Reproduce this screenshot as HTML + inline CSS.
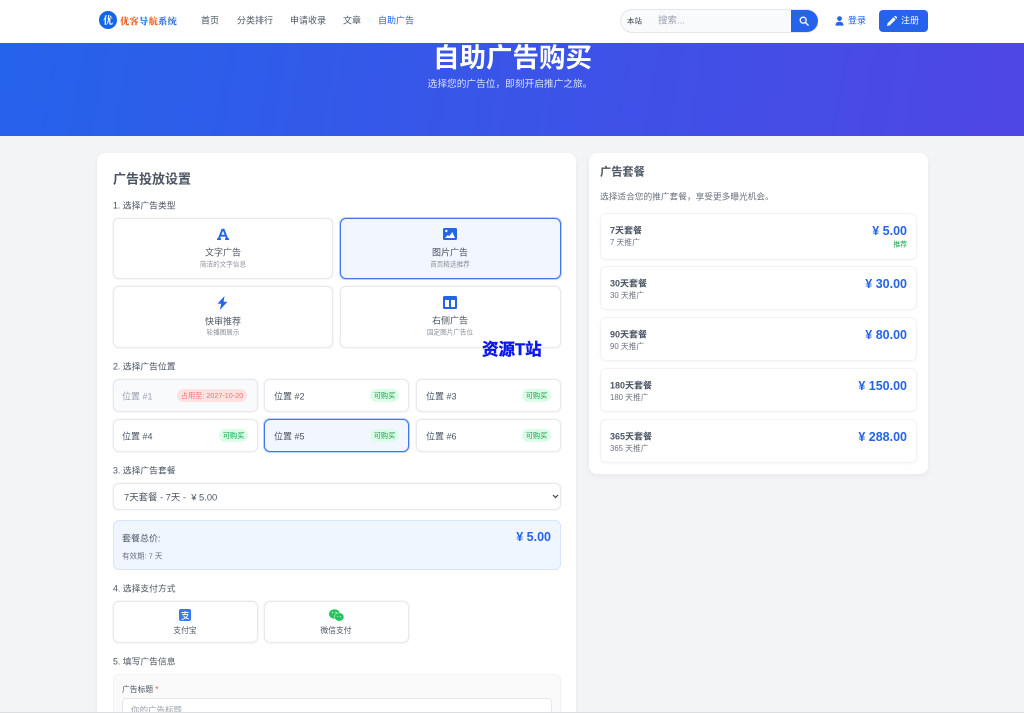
<!DOCTYPE html>
<html lang="zh"><head><meta charset="utf-8"><title>自助广告购买</title>
<style>
*{box-sizing:border-box}
html{margin:0;padding:0;width:1024px;height:713px;overflow:hidden;background:#f3f4f6}
body{margin:0;padding:0;width:1024px;height:713px;overflow:hidden;background:#f3f4f6;position:relative;font-family:"Liberation Sans","Noto Sans CJK SC",sans-serif;color:#4b5563;filter:blur(.3px)}
.a{position:absolute;white-space:nowrap}
.t{position:absolute;white-space:nowrap;transform:translateY(calc(-50% + 2px));line-height:1}
.c{text-align:center;transform:translate(-50%,calc(-50% + 2px))}
.b{position:absolute;background:#fff;border:1px solid #e7e9ec;border-radius:6px;box-shadow:0 0 0 1px rgba(229,231,235,.35)}
.sel{background:#f2f6fe;border:1px solid #3f78ee;box-shadow:0 0 0 1px rgba(63,120,238,.35)}
.tag{position:absolute;height:13px;line-height:13px;border-radius:7px;background:#dcfce7;color:#16a34a;font-size:7.200px;text-align:center;white-space:nowrap}
.pk{position:absolute;left:600px;width:317px;background:#fff;border:1px solid #f1f2f4;border-radius:6px;box-shadow:0 1px 2px rgba(0,0,0,.03)}
.price{position:absolute;right:21px;white-space:nowrap;font-size:12.500px;font-weight:700;color:#2563eb;line-height:1;transform:translateY(-50%)}
</style></head><body>

<div class="a" style="left:0;top:0;width:1024px;height:43px;background:#fff"></div>
<div class="a" style="left:99px;top:11px;width:18px;height:18px;border-radius:50%;background:#1266e8;color:#fff;font:700 10px/18px 'Noto Serif CJK SC',serif;text-align:center">优</div>
<div class="t" style="left:120px;top:19px;font:900 9.300px/1 'Noto Serif CJK SC',serif;letter-spacing:.2px"><span style="color:#f2651c">优客</span><span style="color:#2f7be8">导</span><span style="color:#f2651c">航</span><span style="color:#2f7be8">系统</span></div>
<div class="t" style="left:201px;top:19px;font-size:9px;color:#4b5563">首页</div>
<div class="t" style="left:237px;top:19px;font-size:9px;color:#4b5563">分类排行</div>
<div class="t" style="left:290px;top:19px;font-size:9px;color:#4b5563">申请收录</div>
<div class="t" style="left:343px;top:19px;font-size:9px;color:#4b5563">文章</div>
<div class="t" style="left:378px;top:19px;font-size:9px;color:#2563eb">自助广告</div>

<div class="a" style="left:620px;top:9px;width:198px;height:24px;border-radius:12px;background:#f9fafb;border:1px solid #e5e7eb"></div>
<div class="a" style="left:791px;top:10px;width:27px;height:22px;background:#2563eb;border-radius:0 11px 11px 0"></div>
<svg class="a" style="left:799px;top:16px" width="10" height="10" viewBox="0 0 11 11"><circle cx="4.600" cy="4.600" r="3.300" fill="none" stroke="#fff" stroke-width="1.400"/><path d="M7 7l3 3" stroke="#fff" stroke-width="1.600" stroke-linecap="round"/></svg>
<div class="t" style="left:627px;top:19px;font-size:7.500px;color:#374151">本站</div>
<div class="t" style="left:658px;top:19px;font-size:9.500px;color:#9ca3af">搜索...</div>
<svg class="a" style="left:835px;top:16px" width="9" height="10" viewBox="0 0 9 10"><circle cx="4.500" cy="2.600" r="2.400" fill="#2563eb"/><path d="M.5 9.600C.5 7 2 5.800 4.500 5.800S8.500 7 8.500 9.600z" fill="#2563eb"/></svg>
<div class="t" style="left:848px;top:19px;font-size:9px;color:#2563eb">登录</div>
<div class="a" style="left:879px;top:10px;width:49px;height:22px;background:#2563eb;border-radius:4px"></div>
<svg class="a" style="left:887px;top:16px" width="10" height="10" viewBox="0 0 10 10"><path d="M0 10l.6-2.800L6.500 1.300l2.200 2.200L2.800 9.400zM7.200.6l.6-.5c.4-.3.800-.3 1.100 0l1 1c.3.3.3.800 0 1.100l-.5.600z" fill="#fff"/></svg>
<div class="t" style="left:901px;top:19px;font-size:9px;color:#fff">注册</div>

<div class="a" style="left:0;top:43px;width:1024px;height:93px;background:linear-gradient(100deg,#2563eb,#4f46e5)"></div>
<div class="t c" style="left:512.500px;top:56px;font-size:26.500px;font-weight:700;color:#fff">自助广告购买</div>
<div class="t c" style="left:510px;top:83px;font-size:9.700px;color:#dbe2fb">选择您的广告位，即刻开启推广之旅。</div>

<div class="a" style="left:97px;top:153px;width:479px;height:570px;background:#fff;border-radius:8px;box-shadow:0 2px 6px rgba(0,0,0,.05)"></div>
<div class="t" style="left:113px;top:177px;font-size:13px;font-weight:700;color:#4b5563">广告投放设置</div>
<div class="t" style="left:113px;top:204px;font-size:8.800px;color:#4b5563">1. 选择广告类型</div>

<div class="b" style="left:113px;top:218px;width:220px;height:61px"></div>
<svg class="a" style="left:217px;top:228px" width="12" height="12" viewBox="0 0 12 12"><path d="M4.700.8h2.600L11 10.200h1V12H8v-1.800h.9l-.6-1.600H3.700l-.6 1.600H4V12H0v-1.800h1zM4.400 6.800h3.200L6 2.700z" fill="#2563eb"/></svg>
<div class="t c" style="left:223px;top:251px;font-size:9px;color:#4b5563">文字广告</div>
<div class="t c" style="left:223px;top:264px;font-size:6.600px;color:#8b929d">简洁的文字信息</div>

<div class="b sel" style="left:340px;top:218px;width:221px;height:61px"></div>
<svg class="a" style="left:443px;top:228px" width="14" height="12" viewBox="0 0 14 12"><rect width="14" height="12" rx="1.500" fill="#2563eb"/><circle cx="3.300" cy="3" r="1.200" fill="#fff"/><path d="M2 10l2.800-3 1.400 1.300L9.300 4 12 10z" fill="#fff"/></svg>
<div class="t c" style="left:450px;top:251px;font-size:9px;color:#4b5563">图片广告</div>
<div class="t c" style="left:450px;top:264px;font-size:6.600px;color:#8b929d">首页精选推荐</div>

<div class="b" style="left:113px;top:286px;width:220px;height:62px"></div>
<svg class="a" style="left:217px;top:296px" width="11" height="14" viewBox="0 0 11 14"><path d="M7.500 0L.5 7.800h3.700L2.800 14 10.500 5.800H6.600z" fill="#2563eb"/></svg>
<div class="t c" style="left:223px;top:320px;font-size:9px;color:#4b5563">快审推荐</div>
<div class="t c" style="left:223px;top:332px;font-size:6.600px;color:#8b929d">轮播图展示</div>

<div class="b" style="left:340px;top:286px;width:221px;height:62px"></div>
<svg class="a" style="left:443px;top:296px" width="14" height="13" viewBox="0 0 14 13"><path fill-rule="evenodd" d="M1.500 0h11A1.500 1.500 0 0 1 14 1.500v10a1.500 1.500 0 0 1-1.500 1.500h-11A1.500 1.500 0 0 1 0 11.500v-10A1.500 1.500 0 0 1 1.500 0zM2 4v7h4V4zm6 0v7h4V4z" fill="#2563eb"/></svg>
<div class="t c" style="left:450px;top:319px;font-size:9px;color:#4b5563">右侧广告</div>
<div class="t c" style="left:450px;top:332px;font-size:6.600px;color:#8b929d">固定图片广告位</div>

<div class="t" style="left:482px;top:348px;font-size:16.500px;font-weight:700;color:#0a16ee;-webkit-text-stroke:.4px #0a16ee">资源T站</div>

<div class="t" style="left:113px;top:365px;font-size:8.800px;color:#4b5563">2. 选择广告位置</div>

<div class="b" style="left:113px;top:379px;width:145px;height:33px;background:#f9fafb"></div>
<div class="t" style="left:122px;top:395px;font-size:9px;color:#9ca3af">位置 #1</div>
<div class="tag" style="left:177px;top:389px;width:70px;background:#fee2e2;color:#f87171">占用至: 2027-10-20</div>

<div class="b" style="left:264px;top:379px;width:145px;height:33px"></div>
<div class="t" style="left:274px;top:395px;font-size:9px;color:#4b5563">位置 #2</div>
<div class="tag" style="left:370px;top:389px;width:29px">可购买</div>

<div class="b" style="left:416px;top:379px;width:145px;height:33px"></div>
<div class="t" style="left:426px;top:395px;font-size:9px;color:#4b5563">位置 #3</div>
<div class="tag" style="left:522px;top:389px;width:29px">可购买</div>

<div class="b" style="left:113px;top:419px;width:145px;height:33px"></div>
<div class="t" style="left:122px;top:435px;font-size:9px;color:#4b5563">位置 #4</div>
<div class="tag" style="left:219px;top:429px;width:29px">可购买</div>

<div class="b sel" style="left:264px;top:419px;width:145px;height:33px"></div>
<div class="t" style="left:274px;top:435px;font-size:9px;color:#4b5563">位置 #5</div>
<div class="tag" style="left:370px;top:429px;width:29px">可购买</div>

<div class="b" style="left:416px;top:419px;width:145px;height:33px"></div>
<div class="t" style="left:426px;top:435px;font-size:9px;color:#4b5563">位置 #6</div>
<div class="tag" style="left:522px;top:429px;width:29px">可购买</div>

<div class="t" style="left:113px;top:469px;font-size:8.800px;color:#4b5563">3. 选择广告套餐</div>
<div class="b" style="left:113px;top:483px;width:448px;height:27px"></div>
<div class="t" style="left:124px;top:495px;font-size:9.400px;color:#4b5563;white-space:pre">7天套餐 - 7天 -  ¥ 5.00</div>
<svg class="a" style="left:552px;top:494px" width="7" height="5" viewBox="0 0 7 5"><path d="M1 1l2.500 2.500L6 1" fill="none" stroke="#374151" stroke-width="1.200"/></svg>

<div class="a" style="left:113px;top:520px;width:448px;height:50px;background:#eff6ff;border:1px solid #d5e5fd;border-radius:6px"></div>
<div class="t" style="left:122px;top:537px;font-size:9px;color:#4b5563">套餐总价:</div>
<div class="t" style="left:122px;top:554px;font-size:7.500px;color:#6b7280">有效期: 7 天</div>
<div class="price" style="right:473px;top:537px">¥ 5.00</div>

<div class="t" style="left:113px;top:587px;font-size:8.800px;color:#4b5563">4. 选择支付方式</div>
<div class="b" style="left:113px;top:601px;width:145px;height:42px"></div>
<svg class="a" style="left:179px;top:609px" width="12" height="12" viewBox="0 0 12 12"><rect width="12" height="12" rx="2" fill="#2f7bf0"/><path d="M2.500 3.500h7M6 2v3M3 5.500h6C8 8.500 5.500 10 2.500 10.500M4.500 6.500c1 2 3 3 5.500 3.500" fill="none" stroke="#fff" stroke-width=".9"/></svg>
<div class="t c" style="left:185px;top:629px;font-size:7.800px;color:#4b5563">支付宝</div>
<div class="b" style="left:264px;top:601px;width:145px;height:42px"></div>
<svg class="a" style="left:329px;top:609px" width="15" height="13" viewBox="0 0 15 13"><ellipse cx="5.500" cy="5" rx="5.500" ry="4.800" fill="#22c55e"/><ellipse cx="10.200" cy="8" rx="4.800" ry="4.200" fill="#22c55e" stroke="#fff" stroke-width=".5"/><circle cx="3.600" cy="3.600" r=".6" fill="#fff"/><circle cx="7" cy="3.600" r=".6" fill="#fff"/><circle cx="8.800" cy="7.500" r=".5" fill="#fff"/><circle cx="11.600" cy="7.500" r=".5" fill="#fff"/></svg>
<div class="t c" style="left:336px;top:629px;font-size:7.800px;color:#4b5563">微信支付</div>

<div class="t" style="left:113px;top:660px;font-size:8.800px;color:#4b5563">5. 填写广告信息</div>
<div class="a" style="left:113px;top:674px;width:448px;height:60px;background:#fafafa;border:1px solid #f1f2f4;border-radius:6px"></div>
<div class="t" style="left:122px;top:688px;font-size:7.800px;color:#4b5563">广告标题 <span style="color:#ef4444">*</span></div>
<div class="a" style="left:122px;top:698px;width:430px;height:30px;background:#fff;border:1px solid #e5e7eb;border-radius:4px"></div>
<div class="t" style="left:131px;top:708px;font-size:8.500px;color:#9ca3af">你的广告标题</div>

<div class="a" style="left:589px;top:153px;width:339px;height:321px;background:#fff;border-radius:8px;box-shadow:0 2px 6px rgba(0,0,0,.05)"></div>
<div class="t" style="left:600px;top:171px;font-size:11.200px;font-weight:700;color:#4b5563">广告套餐</div>
<div class="t" style="left:600px;top:195px;font-size:8.700px;color:#6b7280">选择适合您的推广套餐，享受更多曝光机会。</div>

<div class="pk" style="top:213px;height:47px"></div>
<div class="t" style="left:610px;top:229px;font-size:9px;font-weight:700;color:#4b5563">7天套餐</div>
<div class="t" style="left:610px;top:241px;font-size:7.800px;color:#6b7280">7 天推广</div>
<div class="price" style="right:117px;top:231px">¥ 5.00</div>
<div class="t" style="right:117px;top:244px;font-size:6.800px;color:#16a34a">推荐</div>

<div class="pk" style="top:266px;height:44px"></div>
<div class="t" style="left:610px;top:282px;font-size:9px;font-weight:700;color:#4b5563">30天套餐</div>
<div class="t" style="left:610px;top:294px;font-size:7.800px;color:#6b7280">30 天推广</div>
<div class="price" style="right:117px;top:284px">¥ 30.00</div>

<div class="pk" style="top:317px;height:44px"></div>
<div class="t" style="left:610px;top:333px;font-size:9px;font-weight:700;color:#4b5563">90天套餐</div>
<div class="t" style="left:610px;top:345px;font-size:7.800px;color:#6b7280">90 天推广</div>
<div class="price" style="right:117px;top:335px">¥ 80.00</div>

<div class="pk" style="top:368px;height:44px"></div>
<div class="t" style="left:610px;top:384px;font-size:9px;font-weight:700;color:#4b5563">180天套餐</div>
<div class="t" style="left:610px;top:396px;font-size:7.800px;color:#6b7280">180 天推广</div>
<div class="price" style="right:117px;top:386px">¥ 150.00</div>

<div class="pk" style="top:419px;height:44px"></div>
<div class="t" style="left:610px;top:435px;font-size:9px;font-weight:700;color:#4b5563">365天套餐</div>
<div class="t" style="left:610px;top:447px;font-size:7.800px;color:#6b7280">365 天推广</div>
<div class="price" style="right:117px;top:437px">¥ 288.00</div>

<div class="a" style="left:0;top:712px;width:1024px;height:1px;background:#dcdde0"></div>
</body></html>
